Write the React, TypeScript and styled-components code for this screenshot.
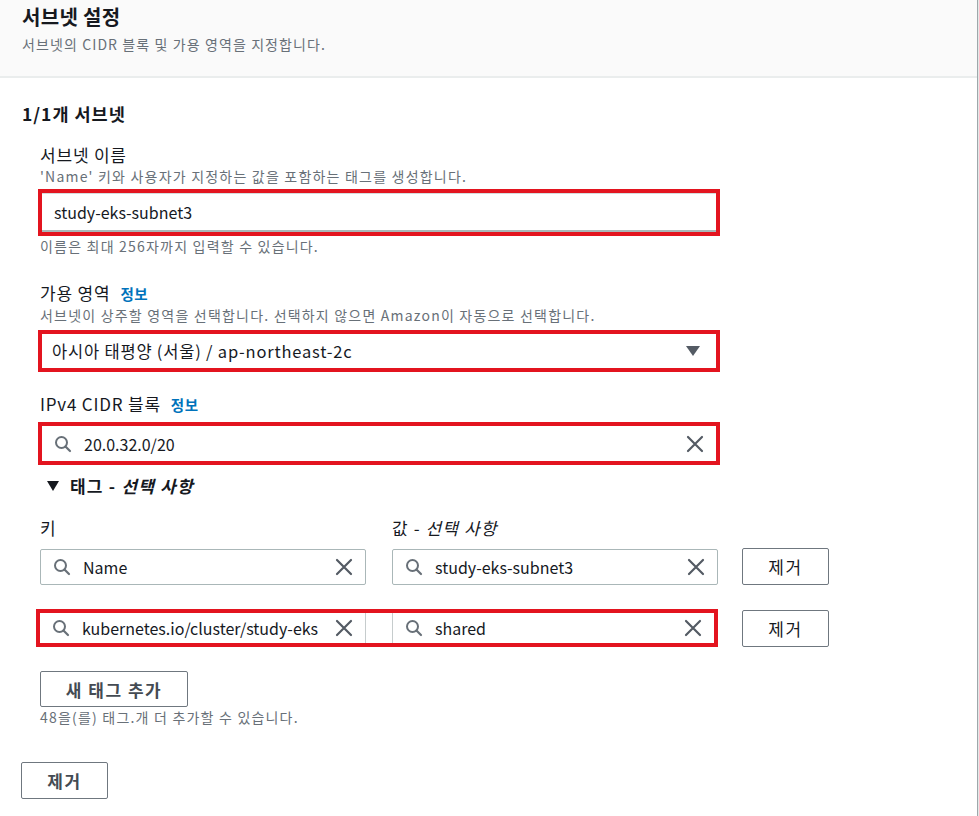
import React from 'react';
import styled, { createGlobalStyle } from 'styled-components';

const GlobalStyle = createGlobalStyle`
	html,
	body {
		margin: 0;
		padding: 0;
		background: #e4e8e8;
	}

	body {
		font-family: 'Noto Sans CJK KR', 'Noto Sans', sans-serif;
		color: #16191f;
	}
`;

const SearchIcon = () => (
	<svg width="18" height="18" viewBox="0 0 18 18" fill="none">
		<circle cx="7.5" cy="7.5" r="5.5" stroke="#687078" strokeWidth="2" />
		<line x1="11.5" y1="11.5" x2="16" y2="16" stroke="#687078" strokeWidth="2.2" strokeLinecap="round" />
	</svg>
);

const ClearIcon = () => (
	<svg width="18" height="18" viewBox="0 0 18 18" fill="none">
		<path d="M2 2 L16 16 M16 2 L2 16" stroke="#545b64" strokeWidth="2.2" strokeLinecap="round" />
	</svg>
);

const CaretIcon = () => (
	<svg width="14" height="12" viewBox="0 0 14 12">
		<path d="M0 1 L14 1 L7 11 Z" fill="#545b64" />
	</svg>
);

const SearchField = ({ value }: { value: string }) => (
	<>
		<SearchIcon />
		<FieldText>{value}</FieldText>
		<ClearIcon />
	</>
);

export default function App() {
	return (
		<Page>
			<GlobalStyle />
			<Header>
				<Title>서브넷 설정</Title>
				<Subtitle>서브넷의 CIDR 블록 및 가용 영역을 지정합니다.</Subtitle>
			</Header>

			<Content>
				<SectionTitle>1/1개 서브넷</SectionTitle>

				<Fields>
					<Label $top={18}>서브넷 이름</Label>
					<Description>'Name' 키와 사용자가 지정하는 값을 포함하는 태그를 생성합니다.</Description>
					<Highlight $top={4}>
						<NameInput>study-eks-subnet3</NameInput>
					</Highlight>
					<Description>이름은 최대 256자까지 입력할 수 있습니다.</Description>

					<Label $top={27}>
						가용 영역 <InfoLink>정보</InfoLink>
					</Label>
					<Description>서브넷이 상주할 영역을 선택합니다. 선택하지 않으면 Amazon이 자동으로 선택합니다.</Description>
					<Highlight $top={6}>
						<SelectBox>
							<FieldText>아시아 태평양 (서울) / ap-northeast-2c</FieldText>
							<CaretIcon />
						</SelectBox>
					</Highlight>

					<Label $top={21}>
						IPv4 CIDR 블록 <InfoLink>정보</InfoLink>
					</Label>
					<Highlight $top={6}>
						<SearchBox $height={35}>
							<SearchField value="20.0.32.0/20" />
						</SearchBox>
					</Highlight>

					<TagToggle>
						<svg width="12" height="10" viewBox="0 0 12 10">
							<path d="M0 0 L12 0 L6 10 Z" fill="#16191f" />
						</svg>
						<span>
							태그 - <em>선택 사항</em>
						</span>
					</TagToggle>

					<TagHeader>
						<ColumnLabel>키</ColumnLabel>
						<ColumnLabel>
							값 - <em>선택 사항</em>
						</ColumnLabel>
					</TagHeader>

					<TagRow>
						<TagPair>
							<SearchBox $height={36} $boxed>
								<SearchField value="Name" />
							</SearchBox>
							<SearchBox $height={36} $boxed>
								<SearchField value="study-eks-subnet3" />
							</SearchBox>
						</TagPair>
						<Button>제거</Button>
					</TagRow>

					<TagRow $top={24}>
						<TagHighlight>
							<SearchBox $height={30} $side="right">
								<SearchField value="kubernetes.io/cluster/study-eks" />
							</SearchBox>
							<SearchBox $height={30} $side="left">
								<SearchField value="shared" />
							</SearchBox>
						</TagHighlight>
						<Button>제거</Button>
					</TagRow>

					<AddButton $bold>새 태그 추가</AddButton>
					<Description>48을(를) 태그.개 더 추가할 수 있습니다.</Description>
				</Fields>

				<RemoveSubnet $bold>제거</RemoveSubnet>
			</Content>
		</Page>
	);
}

const Page = styled.div`
	width: 977px;
	min-height: 816px;
	background: #ffffff;
	border-right: 1px solid #9ea7aa;
`;

const Header = styled.header`
	display: flex;
	flex-direction: column;

	padding: 3px 22px 22px;
	background: #fafafa;
	border-bottom: 2px solid #eaeded;
`;

const Title = styled.h1`
	margin: 0;
	font-size: 20px;
	line-height: 28px;
	font-weight: 700;
	letter-spacing: 0.3px;
	color: #16191f;
`;

const Subtitle = styled.p`
	margin: 3px 0 0;
	font-size: 14px;
	line-height: 20px;
	letter-spacing: 1.1px;
	color: #687078;
`;

const Content = styled.section`
	padding: 24px 0 16px 22px;
`;

const SectionTitle = styled.h2`
	margin: 0;
	font-size: 17.5px;
	line-height: 24px;
	font-weight: 700;
	letter-spacing: 1px;
`;

const Fields = styled.div`
	display: flex;
	flex-direction: column;
	align-items: flex-start;

	width: 678px;
	padding-left: 18px;
`;

const Label = styled.div<{ $top: number }>`
	display: flex;
	align-items: baseline;
	gap: 10px;

	margin-top: ${({ $top }) => $top}px;
	font-size: 17px;
	line-height: 22px;
	letter-spacing: 0.8px;
	color: #16191f;
`;

const InfoLink = styled.a`
	font-size: 14.5px;
	font-weight: 700;
	letter-spacing: 0.5px;
	color: #0073bb;
	text-decoration: none;
`;

const Description = styled.div`
	margin-top: 1px;
	font-size: 14px;
	line-height: 18px;
	letter-spacing: 1.2px;
	color: #687078;
`;

const Highlight = styled.div<{ $top: number }>`
	align-self: stretch;

	margin: ${({ $top }) => $top}px -2px 0;
	border: 4px solid #e3141f;
	background: #ffffff;
`;

const NameInput = styled.div`
	display: flex;
	align-items: center;

	height: 36px;
	padding: 0 12px;
	border-top: 1px solid #d5dbdb;
	border-bottom: 2px solid #aab7b8;

	font-size: 16px;
	color: #16191f;
`;

const SelectBox = styled.div`
	display: flex;
	align-items: center;
	gap: 12px;

	height: 34px;
	padding: 0 16px 0 10px;

	font-size: 16.5px;
	letter-spacing: 0.8px;
`;

const SearchBox = styled.div<{ $height: number; $boxed?: boolean; $side?: 'left' | 'right' }>`
	display: flex;
	align-items: center;
	gap: 12px;

	height: ${({ $height }) => $height}px;
	padding: 0 12px;
	background: #ffffff;
	border: ${({ $boxed }) => ($boxed ? '1px solid #aab7b8' : 'none')};
	border-radius: ${({ $boxed }) => ($boxed ? '2px' : '0')};
	${({ $side }) => ($side ? `border-${$side}: 1px solid #c6cccd;` : '')}
	box-sizing: border-box;

	font-size: 16px;
	color: #16191f;
`;

const FieldText = styled.span`
	flex: 1;
	overflow: hidden;
	white-space: nowrap;
	line-height: 24px;
`;

const TagToggle = styled.div`
	display: flex;
	align-items: center;
	gap: 11px;

	margin-top: 10px;
	padding-left: 7px;
	font-size: 17px;
	line-height: 22px;
	font-weight: 700;
	letter-spacing: 1.2px;

	em {
		font-style: italic;
	}
`;

const TagHeader = styled.div`
	display: grid;
	grid-template-columns: 326px 326px;
	gap: 26px;

	margin-top: 20px;
`;

const ColumnLabel = styled.div`
	font-size: 17px;
	line-height: 22px;
	letter-spacing: 1.1px;
	color: #16191f;

	em {
		font-style: italic;
	}
`;

const TagRow = styled.div<{ $top?: number }>`
	display: flex;
	align-items: center;
	gap: 24px;

	margin-top: ${({ $top }) => $top ?? 9}px;
`;

const TagPair = styled.div`
	display: grid;
	grid-template-columns: 326px 326px;
	gap: 26px;
`;

const TagHighlight = styled.div`
	display: grid;
	grid-template-columns: 326px 322px;
	gap: 26px;

	margin-left: -4px;
	border: 4px solid #e3141f;
`;

const Button = styled.button<{ $bold?: boolean }>`
	display: flex;
	align-items: center;
	justify-content: center;

	width: 87px;
	height: 37px;
	padding: 0;
	background: #ffffff;
	border: 1px solid #6f777f;
	border-radius: 2px;

	font-family: inherit;
	font-size: 17px;
	font-weight: ${({ $bold }) => ($bold ? 700 : 400)};
	letter-spacing: 1.5px;
	color: ${({ $bold }) => ($bold ? '#444b53' : '#16191f')};
	cursor: pointer;
`;

const AddButton = styled(Button)`
	width: 148px;
	height: 36px;
	margin-top: 24px;
`;

const RemoveSubnet = styled(Button)`
	width: 87px;
	margin: 36px 0 0 -1px;
`;
